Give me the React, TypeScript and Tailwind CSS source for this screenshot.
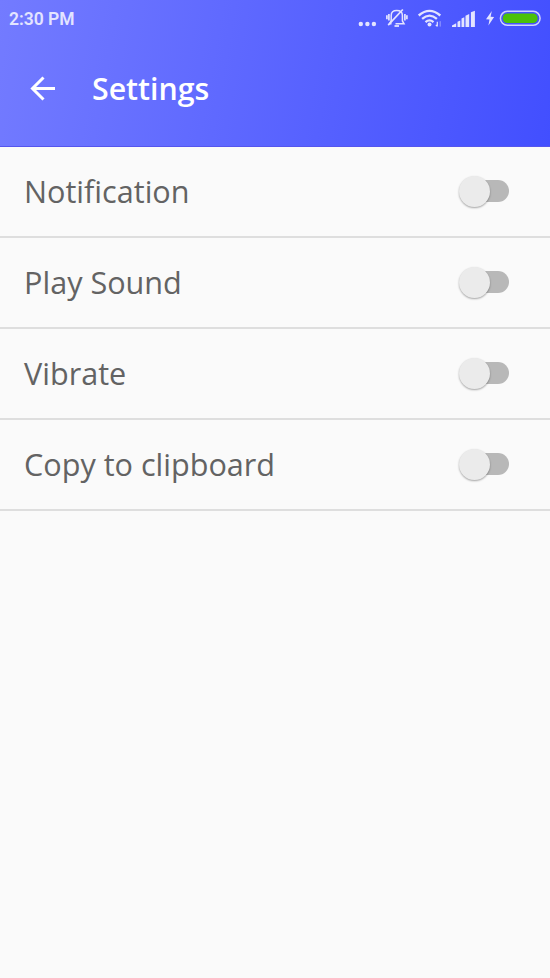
import React from "react";

const settings = ["Notification", "Play Sound", "Vibrate", "Copy to clipboard"];

function MoreDots() {
  return (
    <svg width="20" height="38" viewBox="358 0 20 38" fill="currentColor">
      <circle cx="360.8" cy="24" r="2.2" />
      <circle cx="367.4" cy="24" r="2.2" />
      <circle cx="373.9" cy="24" r="2.2" />
    </svg>
  );
}

function MutedBell() {
  return (
    <svg width="24" height="38" viewBox="385 0 24 38" fill="none" stroke="currentColor" strokeWidth="1.5">
      <path d="M391.2 21V15.5Q391.2 10.6 396.8 10.6Q402.4 10.6 402.4 15.5V21L404 23.7H395.5" />
      <path d="M391.2 21L389.5 23.7H391.5" />
      <path d="M388.9 14V20.5M386.9 15.2V19.2M404.9 14V20.5M406.9 15.2V19.2" strokeWidth="1.7" />
      <path d="M394.5 26H399" strokeWidth="1.8" />
      <path d="M388.2 25.2L402.8 9.5" strokeWidth="1.7" />
    </svg>
  );
}

function Wifi() {
  return (
    <svg width="26" height="38" viewBox="416 0 26 38" fill="none" stroke="currentColor" strokeWidth="2.3">
      <path d="M418.7 15.5Q429.5 6.3 440.3 15.5" />
      <path d="M422.1 18.9Q429.5 12.4 436.9 18.9" />
      <path d="M425.5 22.1Q429.5 18.6 433.5 22.1" />
      <circle cx="429.5" cy="24.6" r="2" fill="currentColor" stroke="none" />
      <path d="M437.3 21.8V26.6M435.8 24.8L437.3 26.4" strokeWidth="1.2" />
      <path d="M440.2 21.2V26.6" strokeWidth="1" opacity=".5" />
    </svg>
  );
}

function Signal() {
  return (
    <svg width="25" height="38" viewBox="451 0 25 38" fill="currentColor">
      <path d="M452 27V25.6L456.2 23.3V27zM457.5 27V21.8L460.3 20.6V27zM461.5 27V18.6L464.3 17.2V27zM465.5 27V15.8L469.2 14V27zM470.9 27V12.3L474.9 10.8V27z" />
    </svg>
  );
}

function Battery() {
  return (
    <svg width="58" height="38" viewBox="484 0 58 38">
      <path d="M491.8 11L486 19.2L489.5 19.6L488.4 25.5L494.1 17L490.6 16.7z" fill="currentColor" />
      <rect x="500.4" y="11.3" width="39.7" height="14" rx="7" fill="none" stroke="#d0d2ff" strokeWidth="1.5" />
      <rect x="502.8" y="13.5" width="34.8" height="9.5" rx="4.5" fill="#4bc10b" />
    </svg>
  );
}

function Toggle() {
  return (
    <button role="switch" aria-checked="false" className="flex h-[31px] w-[50px] items-center">
      <span className="z-10 h-[31px] w-[31px] shrink-0 rounded-full bg-[#ebebeb] shadow-[0_1px_2px_rgba(0,0,0,0.35)]" />
      <span className="-ml-6 h-[22px] w-[43px] rounded-full bg-[#b8b8b8]" />
    </button>
  );
}

export default function App() {
  return (
    <main className="flex h-[978px] w-[550px] flex-col overflow-hidden bg-[#fafafa] font-['Open_Sans',sans-serif]">
      <header className="h-[147px] border-b border-[#5555ed] bg-linear-[100deg,#737bff,#424fff]">
        <div className="flex h-[38px] items-center pr-2 pl-[9px] text-[#e3e4ff]">
          <time className="mt-0.5 mr-auto font-['Roboto',sans-serif] text-[17.5px] leading-none font-semibold">2:30 PM</time>
          <MoreDots />
          <span className="ml-[7px]"><MutedBell /></span>
          <span className="ml-[7px]"><Wifi /></span>
          <span className="ml-[9px]"><Signal /></span>
          <span className="ml-2"><Battery /></span>
        </div>
        <div className="flex h-[102px] items-center pl-[30px] text-white">
          <svg width="26" height="26" viewBox="0 0 26 26" fill="none" stroke="currentColor" strokeWidth="3">
            <path d="M25 12.5H3M13.5 1.5L2.5 12.5L13.5 23.5" />
          </svg>
          <h1 className="ml-9 text-[30.3px] leading-none font-semibold">Settings</h1>
        </div>
      </header>
      <ul>
        {settings.map((name) => (
          <li key={name} className="flex h-[91px] items-center justify-between border-b-2 border-[#dedede] pr-[41px] pb-px pl-6">
            <span className="text-[30.6px] leading-8 text-[#636363]">{name}</span>
            <Toggle />
          </li>
        ))}
      </ul>
    </main>
  );
}
